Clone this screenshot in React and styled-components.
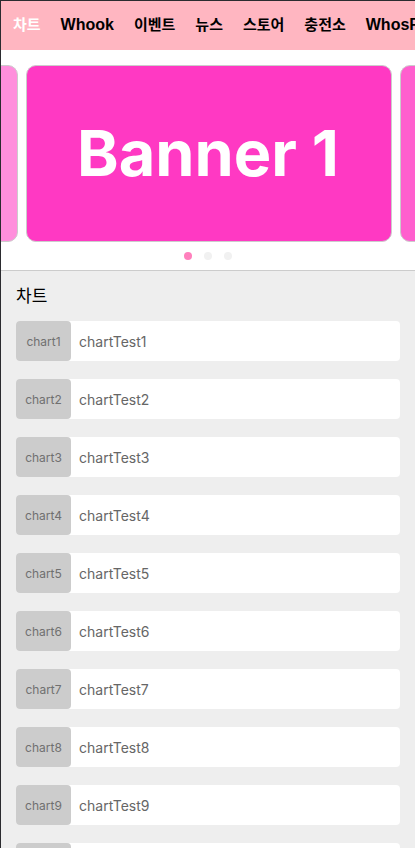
import React, { useState } from "react";
import styled, { createGlobalStyle } from "styled-components";

const GlobalStyle = createGlobalStyle`
  *, *::before, *::after { box-sizing: border-box; }
  body {
    margin: 0;
    background: #ffffff;
    font-family: Inter, "Noto Sans CJK KR", sans-serif;
  }
`;

const Page = styled.div`
  display: flex;
  flex-direction: column;
  height: 100vh;
  overflow: hidden;
  border-top: 1px solid #2b2b2f;
  border-left: 1px solid #2b2b2f;
`;

const Nav = styled.nav`
  flex: none;
  display: flex;
  align-items: center;
  gap: 20px;
  height: 49px;
  padding: 0 12px 2px;
  overflow-x: auto;
  scrollbar-width: none;
  background: #ffb6c1;
`;

const NavLink = styled.a`
  flex: none;
  color: ${({ $active }) => ($active ? "#ffffff" : "#000000")};
  font-family: "Liberation Sans", "Noto Sans CJK KR", sans-serif;
  font-size: ${({ $latin }) => ($latin ? 16 : 15)}px;
  font-weight: 700;
  line-height: 24px;
  text-decoration: none;
  white-space: nowrap;
`;

const Carousel = styled.section`
  flex: none;
  padding: 15px 0 10px;
  background: #ffffff;
`;

const Slides = styled.div`
  display: flex;
  justify-content: center;
  gap: 8px;
  padding-left: 2px;
  overflow: hidden;
`;

const Slide = styled.div`
  flex: none;
  display: flex;
  align-items: center;
  justify-content: center;
  width: calc(100% - 46px);
  height: 177px;
  padding: 0 2px 2px 0;
  border: 1px solid #cccccc;
  border-radius: 10px;
  background: ${({ $color }) => $color};
  color: #ffffff;
  font-size: 63px;
  font-weight: 700;
  line-height: 80px;
  white-space: nowrap;
`;

const Dots = styled.div`
  display: flex;
  justify-content: center;
  gap: 12px;
  padding-top: 10px;
`;

const Dot = styled.button`
  width: 8px;
  height: 8px;
  padding: 0;
  border: 0;
  border-radius: 50%;
  background: ${({ $active }) => ($active ? "#ff80bd" : "#f1f1f1")};
`;

const ChartSection = styled.section`
  flex: 1;
  min-height: 0;
  padding: 10px 15px 0;
  overflow-y: auto;
  scrollbar-width: none;
  border-top: 1px solid #cccccc;
  background: #eeeeee;
`;

const Title = styled.h2`
  margin: 0 0 10px;
  color: #000000;
  font-size: 17px;
  font-weight: 400;
  line-height: 30px;
`;

const ChartList = styled.ul`
  display: flex;
  flex-direction: column;
  gap: 18px;
  margin: 0;
  padding: 0;
  list-style: none;
`;

const ChartRow = styled.li`
  flex: none;
  display: flex;
  align-items: center;
  gap: 8px;
  height: 40px;
  border-radius: 4px;
  background: #ffffff;
`;

const Thumb = styled.span`
  display: flex;
  align-items: center;
  justify-content: center;
  width: 55px;
  height: 40px;
  border-radius: 4px;
  background: #cccccc;
  color: #707070;
  font-size: 12px;
`;

const ChartName = styled.span`
  padding-top: 2px;
  color: #666666;
  font-size: 14px;
  line-height: 20px;
`;

const menu = [
  { label: "차트" },
  { label: "Whook", latin: true },
  { label: "이벤트" },
  { label: "뉴스" },
  { label: "스토어" },
  { label: "충전소" },
  { label: "WhosFan", latin: true },
];

const banners = [
  { name: "Banner 1", color: "#ff39c3" },
  { name: "Banner 2", color: "#ff5fce" },
  { name: "Banner 3", color: "#ff8fdc" },
];

const charts = Array.from({ length: 10 }, (_, i) => i + 1);

export default function App() {
  const [page, setPage] = useState(0);
  const count = banners.length;
  const shown = [-1, 0, 1].map((step) => banners[(page + step + count) % count]);

  return (
    <Page>
      <GlobalStyle />
      <Nav>
        {menu.map(({ label, latin }, i) => (
          <NavLink key={label} href={`#${label}`} $active={i === 0} $latin={latin}>
            {label}
          </NavLink>
        ))}
      </Nav>
      <Carousel>
        <Slides>
          {shown.map(({ name, color }, i) => (
            <Slide key={name} $color={color} aria-hidden={i !== 1}>
              {i === 1 && name}
            </Slide>
          ))}
        </Slides>
        <Dots>
          {banners.map(({ name }, i) => (
            <Dot
              key={name}
              type="button"
              aria-label={name}
              $active={i === page}
              onClick={() => setPage(i)}
            />
          ))}
        </Dots>
      </Carousel>
      <ChartSection>
        <Title>차트</Title>
        <ChartList>
          {charts.map((n) => (
            <ChartRow key={n}>
              <Thumb>chart{n}</Thumb>
              <ChartName>chartTest{n}</ChartName>
            </ChartRow>
          ))}
        </ChartList>
      </ChartSection>
    </Page>
  );
}
